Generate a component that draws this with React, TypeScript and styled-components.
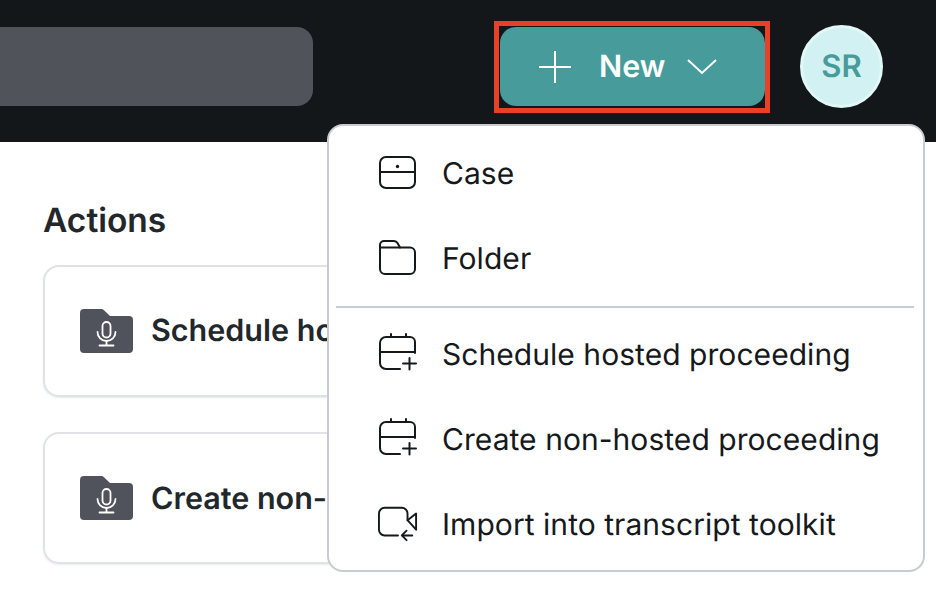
import React from "react";
import styled, { createGlobalStyle } from "styled-components";

const Global = createGlobalStyle`
  html, body { margin: 0; padding: 0; background: #fff; }
  body {
    font-family: Inter, "Liberation Sans", sans-serif;
    width: 936px;
    height: 590px;
    overflow: hidden;
    text-rendering: geometricPrecision;
  }
`;

const Page = styled.div`
  position: relative;
  width: 936px;
  height: 590px;
  overflow: hidden;
  background: #fff;
`;

const Header = styled.header`
  display: flex;
  align-items: flex-start;
  height: 142px;
  padding-top: 27px;
  box-sizing: border-box;
  background: #13171a;
`;

const SearchBar = styled.div`
  width: 313px;
  height: 79px;
  border-radius: 0 16px 16px 0;
  background: #50535a;
`;

const NewButton = styled.button`
  position: relative;
  display: flex;
  align-items: center;
  width: 265px;
  height: 79px;
  margin-left: 187px;
  padding: 0 0 0 38px;
  box-sizing: border-box;
  border: 0;
  border-radius: 16px;
  background: #479b9a;
  color: #fff;
  font: 600 30.500px Inter, sans-serif;
  text-rendering: geometricPrecision;
`;

const Highlight = styled.span`
  position: absolute;
  left: -6px;
  top: -6px;
  width: 276px;
  height: 92px;
  box-sizing: border-box;
  border: 5px solid #ea4025;
  pointer-events: none;
`;

const ButtonLabel = styled.span`
  margin: 0 22px 0 27px;
`;

const Avatar = styled.div`
  display: flex;
  align-items: center;
  justify-content: center;
  width: 83px;
  height: 83px;
  margin: -2px 0 0 35px;
  box-sizing: border-box;
  border: 3px solid #e2f8f8;
  border-radius: 50%;
  background: #d2f1f2;
  color: #479b9a;
  font: 600 31px Inter, sans-serif;
`;

const Main = styled.main`
  padding: 61px 0 0 43px;
`;

const Title = styled.h2`
  margin: 0 0 25.500px;
  color: #22272b;
  font: 600 33.500px/36px Inter, sans-serif;
`;

const ActionList = styled.div`
  display: flex;
  flex-direction: column;
  gap: 35.500px;
`;

const ActionCard = styled.div`
  display: flex;
  align-items: center;
  gap: 18px;
  width: 500px;
  height: 132px;
  padding-left: 35px;
  box-sizing: border-box;
  border: 2px solid #e1e2e7;
  border-radius: 16px;
  box-shadow: 0 1px 2px rgba(40, 45, 60, 0.1);
  color: #22272b;
  font: 600 30.500px Inter, sans-serif;
  white-space: nowrap;
  overflow: hidden;

  svg {
    flex-shrink: 0;
  }
`;

const Menu = styled.div`
  position: absolute;
  left: 327px;
  top: 124px;
  width: 598px;
  height: 448px;
  padding: 4px 9px 0 7px;
  box-sizing: border-box;
  border: 2px solid #c8cbd1;
  border-radius: 16px;
  background: #fff;
`;

const MenuItem = styled.div`
  display: flex;
  align-items: center;
  height: 85px;
  padding-left: 44px;
  color: #16191c;
  font: 400 30px Inter, sans-serif;
  letter-spacing: 0.05px;
  white-space: nowrap;
`;

const MenuIconSlot = styled.span`
  display: flex;
  justify-content: center;
  width: 40px;
  margin-right: 24px;
  margin-left: -2px;
`;

const MenuLabel = styled.span`
  margin-top: 2px;
`;

const Divider = styled.hr`
  height: 2px;
  margin: 6px 0 3px;
  border: 0;
  background: #c8cbd1;
`;

const Line = ({ w, h, children }: { w: number; h: number; children: React.ReactNode }) => (
  <svg width={w} height={h} viewBox={`0 0 ${w} ${h}`} fill="none" stroke="currentColor" strokeWidth={2} strokeLinecap="round" strokeLinejoin="round">
    {children}
  </svg>
);

const CaseIcon = () => (
  <Line w={38} h={34}>
    <rect x="1" y="1" width="35" height="31" rx="6" />
    <path d="M1 16h35" />
    <circle cx="18.500" cy="10.500" r="1.700" fill="currentColor" stroke="none" />
  </Line>
);

const FolderIcon = () => (
  <Line w={38} h={36}>
    <path d="M1 7V5a4 4 0 0 1 4-4h10a4 4 0 0 1 3.500 2L21 7.500h10a5 5 0 0 1 5 5V29a5 5 0 0 1-5 5H6a5 5 0 0 1-5-5V7z" />
    <path d="M1 7.500h20" />
  </Line>
);

const CalendarPlusIcon = () => (
  <Line w={38} h={42}>
    <path d="M12 1v3M27 1v3" />
    <path d="M21 36H7a6 6 0 0 1-6-6V10a6 6 0 0 1 6-6h24a5 5 0 0 1 5 5v11" />
    <path d="M1 19h35" />
    <path d="M30.500 25v11.500M24 30.500h13" />
  </Line>
);

const VideoImportIcon = () => (
  <Line w={42} h={36}>
    <path d="M21 30H7a6 6 0 0 1-6-6V7a6 6 0 0 1 6-6h18a6 6 0 0 1 6 6v7" />
    <path d="M31 14l9-7v17z" />
    <path d="M36 30H25M30 25l-5 5 5 5" />
  </Line>
);

const FolderMic = () => (
  <svg width="53" height="44" viewBox="0 0 53 44">
    <path d="M0 4a4 4 0 0 1 4-4h17a4 4 0 0 1 3 1.300L30 7h19a4 4 0 0 1 4 4v29a4 4 0 0 1-4 4H4a4 4 0 0 1-4-4V4z" fill="#50535b" />
    <g fill="none" stroke="#fff" strokeWidth="1.800" strokeLinecap="round">
      <rect x="22.500" y="13" width="8" height="15.500" rx="4" />
      <path d="M17.500 23a9 9 0 0 0 18 0" />
      <path d="M26.500 32v4M19.500 36.500h14" />
    </g>
  </svg>
);

const items: { label: string; icon: React.ReactNode }[] = [
  { label: "Case", icon: <CaseIcon /> },
  { label: "Folder", icon: <FolderIcon /> },
];
const lower: { label: string; icon: React.ReactNode }[] = [
  { label: "Schedule hosted proceeding", icon: <CalendarPlusIcon /> },
  { label: "Create non-hosted proceeding", icon: <CalendarPlusIcon /> },
  { label: "Import into transcript toolkit", icon: <VideoImportIcon /> },
];

export default function App() {
  return (
    <Page>
      <Global />
      <Header>
        <SearchBar />
        <NewButton>
          <svg width="34" height="34" viewBox="0 0 34 34" fill="none" stroke="#fff" strokeWidth="2">
            <path d="M17 1v32M1 17h32" />
          </svg>
          <ButtonLabel>New</ButtonLabel>
          <svg width="30" height="17" viewBox="0 0 30 17" fill="none" stroke="#fff" strokeWidth="2">
            <path d="M1 2l14 13L29 2" />
          </svg>
          <Highlight />
        </NewButton>
        <Avatar>SR</Avatar>
      </Header>
      <Main>
        <Title>Actions</Title>
        <ActionList>
          <ActionCard><FolderMic />Schedule hosted proceeding</ActionCard>
          <ActionCard><FolderMic />Create non-hosted proceeding</ActionCard>
        </ActionList>
      </Main>
      <Menu>
        {items.map((i) => (
          <MenuItem key={i.label}><MenuIconSlot>{i.icon}</MenuIconSlot><MenuLabel>{i.label}</MenuLabel></MenuItem>
        ))}
        <Divider />
        {lower.map((i) => (
          <MenuItem key={i.label}><MenuIconSlot>{i.icon}</MenuIconSlot><MenuLabel>{i.label}</MenuLabel></MenuItem>
        ))}
      </Menu>
    </Page>
  );
}
